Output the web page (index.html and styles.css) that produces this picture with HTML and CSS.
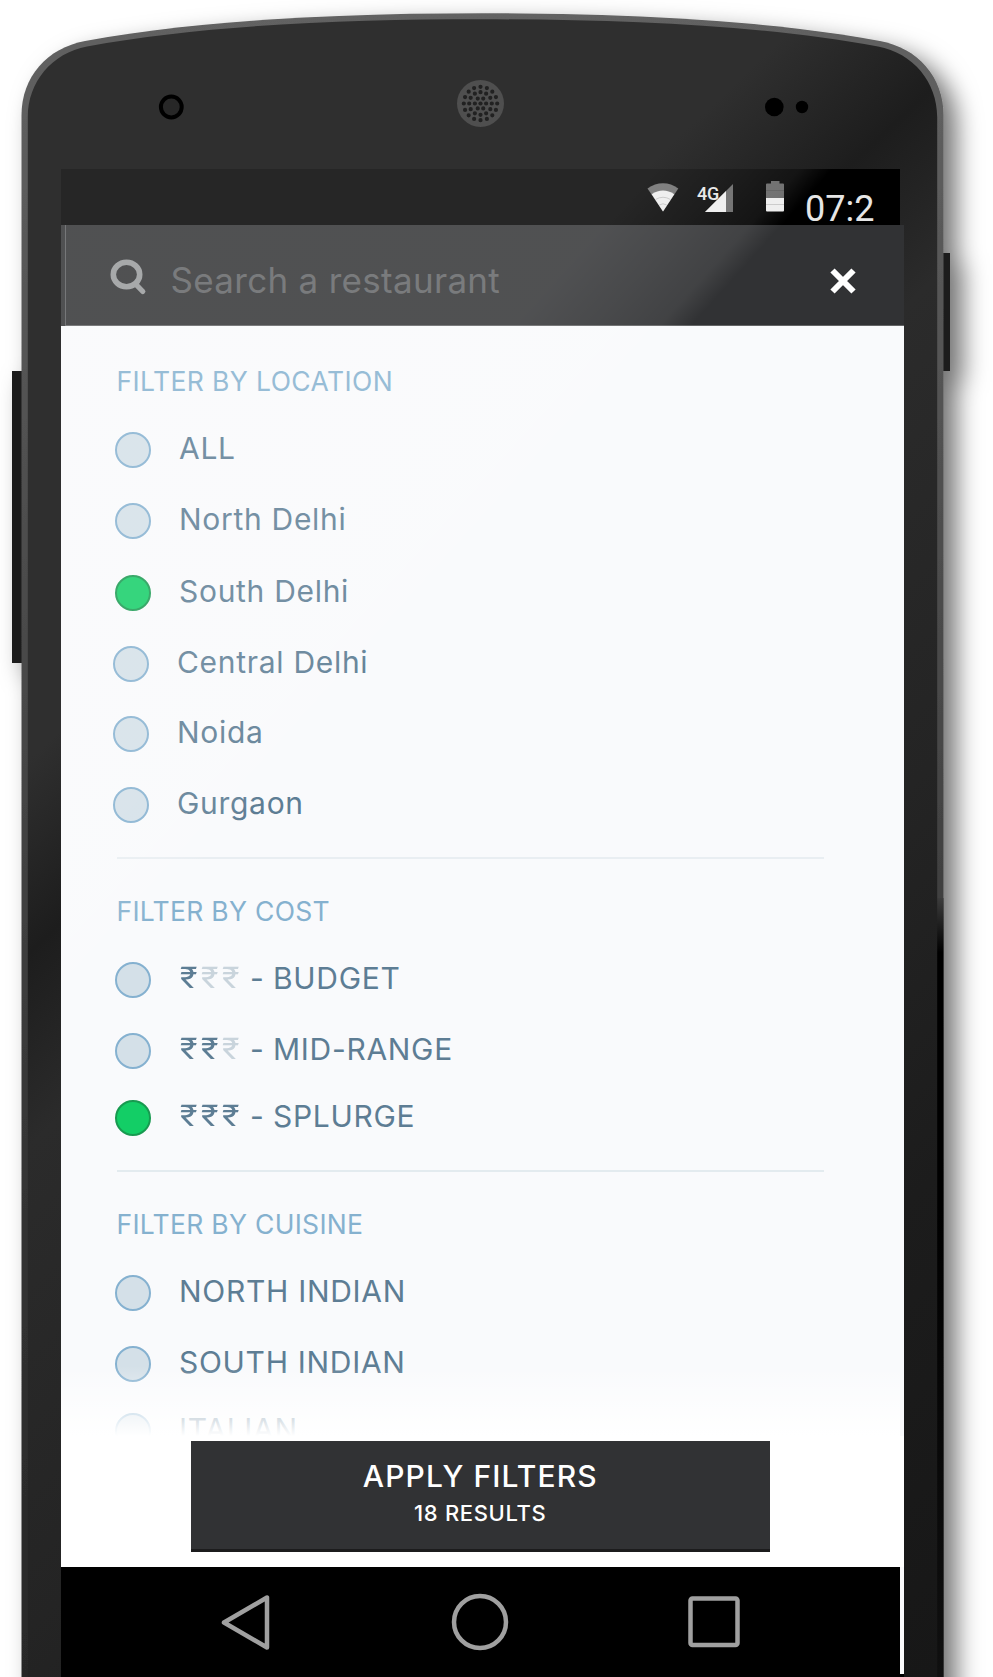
FILE: index.html
```html
<!DOCTYPE html>
<html lang="en">
<head>
<meta charset="utf-8">
<title>Restaurant filters</title>
<link rel="stylesheet" href="styles.css">
</head>
<body>
<div class="phone">
  <svg class="frame" width="993" height="1677" viewBox="0 0 993 1677" aria-hidden="true">
    <defs>
      <linearGradient id="body" gradientUnits="userSpaceOnUse" x1="0" y1="0" x2="1380" y2="1440">
        <stop offset="0" stop-color="#2f2f2f"/>
        <stop offset=".285" stop-color="#2f2f2f"/>
        <stop offset=".355" stop-color="#1d1d1d"/>
        <stop offset=".425" stop-color="#2b2b2b"/>
        <stop offset=".6" stop-color="#242424"/>
        <stop offset=".75" stop-color="#1c1c1c"/>
        <stop offset=".93" stop-color="#171717"/>
      </linearGradient>
      <linearGradient id="rim" x1="0" y1="0" x2="0" y2="1">
        <stop offset="0" stop-color="#626262"/>
        <stop offset=".2" stop-color="#545454"/>
        <stop offset=".45" stop-color="#444"/>
        <stop offset=".7" stop-color="#323232"/>
        <stop offset="1" stop-color="#262626"/>
      </linearGradient>
      <linearGradient id="rimRight" x1="0" y1="0" x2="0" y2="1">
        <stop offset="0" stop-color="#3c3c3c"/>
        <stop offset=".07" stop-color="#000"/>
        <stop offset=".4" stop-color="#000"/>
        <stop offset="1" stop-color="#101010"/>
      </linearGradient>
      <filter id="shadow" filterUnits="userSpaceOnUse" x="-60" y="-60" width="1120" height="1900">
        <feDropShadow dx="13" dy="11" stdDeviation="12.5" flood-color="#000" flood-opacity=".55"/>
      </filter>
    </defs>
    <g filter="url(#shadow)">
      <rect x="12" y="371" width="14" height="292" fill="#1d1d1d"/>
      <rect x="940" y="253" width="10" height="118" fill="#1d1d1d"/>
      <path d="M21.5 1760V115C21.5 77 47 48 85 41C200 20 340 13.3 482.5 13.3S765 20 880 41C918 48 943.5 77 943.5 115V1760Z" fill="url(#rim)"/>
    </g>
    <rect x="937" y="898" width="6.5" height="779" fill="url(#rimRight)"/>
    <path d="M27.8 1760V117C27.8 82 52 53 87 46.5C200 25.5 340 19.3 482.5 19.3S765 25.5 878 46.5C913 53 937.2 82 937.2 117V1760Z" fill="url(#body)"/>
    <circle cx="171.3" cy="107" r="10.4" fill="#272727" stroke="#000" stroke-width="4"/>
    <circle cx="480.5" cy="103.5" r="23.5" fill="#4f4f4f"/>
    <g fill="none" stroke="#212121" stroke-width="4.2" stroke-linecap="round">
      <circle cx="480.5" cy="103.5" r="16.7" pathLength="16" stroke-dasharray="0 1"/>
      <circle cx="480.5" cy="103.5" r="11.3" pathLength="12" stroke-dasharray="0 1"/>
      <circle cx="480.5" cy="103.5" r="5.6" pathLength="6" stroke-dasharray="0 1"/>
    </g>
    <circle cx="480.5" cy="103.5" r="2.1" fill="#212121"/>
    <circle cx="774.3" cy="107" r="9.3"/>
    <circle cx="802" cy="107" r="6.2"/>
  </svg>

  <div class="screen">
    <header class="status">
      <svg class="wifi" width="32" height="30" viewBox="0 0 32 30">
        <path d="M.5 6.500C10 -.5 22 -.5 31.300 6.500L16 29.500Z" fill="#6c6c6c"/>
        <path d="M4.700 12.300C12 7.300 20 7.300 27.300 12.300L16 29.500Z" fill="#ededed"/>
        <path d="M8.500 17.500Q16 13 23.500 17.500M12.300 23Q16 20.500 19.700 23" fill="none" stroke="#c4c4c4"/>
      </svg>
      <div class="cell">
        <svg width="28" height="28" viewBox="0 0 28 28">
          <path d="M28 0V28H0Z" fill="#666"/>
          <path d="M21 7V28H0Z" fill="#ededed"/>
        </svg>
        <span class="gen">4G</span>
      </div>
      <svg class="battery" width="18" height="31" viewBox="0 0 18 31">
        <path d="M5 0h8.500v2.500H17a1 1 0 0 1 1 1V18H0V3.500a1 1 0 0 1 1-1h4Z" fill="#666"/>
        <path d="M0 17h18v12.500a1 1 0 0 1-1 1H1a1 1 0 0 1-1-1Z" fill="#ededed"/>
        <path d="M0 23.500h18" stroke="#c8c8c8"/>
        <path d="M0 9.500h18" stroke="#595959"/>
      </svg>
      <span class="time">07:2</span>
    </header>

    <div class="search">
      <svg class="glass" width="37" height="37" viewBox="0 0 37 37" fill="none" stroke="#989a9b">
        <ellipse cx="16.500" cy="15.500" rx="13.200" ry="12.200" stroke-width="5.600"/>
        <path d="M26 25.500L32.800 32.500" stroke-width="5.200" stroke-linecap="round"/>
      </svg>
      <span class="placeholder">Search a restaurant</span>
      <svg class="close" width="26" height="26" viewBox="0 0 26 26" stroke="#fff" stroke-width="6" fill="none">
        <path d="M2.500 2.500L23.500 23.500M23.500 2.500L2.500 23.500"/>
      </svg>
    </div>

    <main class="filters">
      <section class="group location">
        <h2>FILTER BY LOCATION</h2>
        <ul>
          <li><i class="dot"></i><span>ALL</span></li>
          <li><i class="dot"></i><span>North Delhi</span></li>
          <li><i class="dot on"></i><span>South Delhi</span></li>
          <li class="out"><i class="dot"></i><span>Central Delhi</span></li>
          <li class="out tight"><i class="dot"></i><span>Noida</span></li>
          <li class="out"><i class="dot"></i><span>Gurgaon</span></li>
        </ul>
      </section>
      <section class="group cost">
        <h2>FILTER BY COST</h2>
        <ul>
          <li><i class="dot"></i><b>₹</b><b class="off">₹</b><b class="off">₹</b><em>-</em><span>BUDGET</span></li>
          <li><i class="dot"></i><b>₹</b><b>₹</b><b class="off">₹</b><em>-</em><span>MID-RANGE</span></li>
          <li class="tighter"><i class="dot on"></i><b>₹</b><b>₹</b><b>₹</b><em>-</em><span>SPLURGE</span></li>
        </ul>
      </section>
      <section class="group cuisine">
        <h2>FILTER BY CUISINE</h2>
        <ul>
          <li><i class="dot"></i><span>NORTH INDIAN</span></li>
          <li><i class="dot"></i><span>SOUTH INDIAN</span></li>
          <li class="tighter"><i class="dot"></i><span>ITALIAN</span></li>
        </ul>
      </section>
      <div class="fade"></div>
    </main>

    <div class="actions">
      <button class="apply"><span class="main">APPLY FILTERS</span><span class="sub">18 RESULTS</span></button>
    </div>

    <nav class="nav">
      <svg width="50" height="57" viewBox="0 0 50 57"><path d="M46 3.500V53.500L3 28.500Z"/></svg>
      <svg width="58" height="58" viewBox="0 0 58 58"><circle cx="29" cy="29" r="26"/></svg>
      <svg width="52" height="52" viewBox="0 0 52 52"><rect x="2.500" y="2.500" width="47" height="46.500" rx="2"/></svg>
    </nav>

    <svg class="glare" width="843" height="1508" viewBox="61 169 843 1508" aria-hidden="true">
      <defs>
        <linearGradient id="shine" gradientUnits="userSpaceOnUse" x1="0" y1="0" x2="743" y2="669">
          <stop offset="0" stop-color="#fff" stop-opacity=".15"/>
          <stop offset=".6" stop-color="#fff" stop-opacity=".15"/>
          <stop offset=".66" stop-color="#fff" stop-opacity=".115"/>
          <stop offset=".708" stop-color="#fff" stop-opacity=".08"/>
          <stop offset=".732" stop-color="#fff" stop-opacity="0"/>
        </linearGradient>
      </defs>
      <rect x="61" y="169" width="843" height="1508" fill="url(#shine)"/>
    </svg>
  </div>
</div>
</body>
</html>
```
FILE: styles.css
```css
* { box-sizing: border-box; }
body { margin: 0; background: #fff; }

.phone {
  position: relative;
  width: 993px;
  height: 1677px;
  overflow: hidden;
  padding: 169px 0 0 61px;
  font-family: Inter, "Liberation Sans", sans-serif;
}
.frame { position: absolute; left: 0; top: 0; }

.screen {
  position: relative;
  display: flex;
  flex-direction: column;
  width: 843px;
  height: 1508px;
}
.glare { position: absolute; left: 0; top: 0; pointer-events: none; clip-path: polygon(0 0, 839px 0, 839px 13px, 843px 13px, 843px 1508px, 0 1508px); }

.status {
  display: flex;
  justify-content: flex-end;
  align-items: flex-start;
  width: 839px;
  height: 56px;
  padding-right: 22px;
  background: #000;
  color: #e6e6e6;
  font-family: Roboto, sans-serif;
}
.wifi { margin: 13px 18px 0 0; }
.cell { position: relative; width: 36px; margin: 15px 32.500px 0 0; text-align: right; line-height: 0; }
.gen { position: absolute; left: 0; top: 0; font-size: 18px; line-height: 20px; font-weight: 500; letter-spacing: -.3px; }
.battery { margin: 12px 21.500px 0 0; }
.time { width: 73px; margin-top: 19px; font-size: 36px; line-height: 42px; font-weight: 400; white-space: nowrap; }

.search {
  display: flex;
  align-items: flex-start;
  height: 101px;
  padding: 0 48px 0 43px;
  margin-left: 4px;
  background: #313234;
  border-bottom: 1px solid #636465;
  border-left: 1px solid #5e5f61;
  box-shadow: -4px 0 0 -1px #313234, -4px 0 0 0 #313234;
}
.glass { margin: 34px 0 0 .5px; }
.placeholder { flex: 1; margin: 31px 0 0 24px; color: #626466; font-size: 35px; line-height: 48px; font-weight: 400; letter-spacing: .3px; }
.close { margin-top: 43px; }

.filters {
  position: relative;
  height: 1110px;
  padding: 0 80px 0 54px;
  background: #f9fafc;
}
.group { margin-left: 2px; }
.group h2 {
  margin: 0 0 0 -.5px;
  padding-top: 39px;
  height: 106px;
  color: #85b1cf;
  font-size: 26.5px;
  line-height: 32px;
  font-weight: 400;
  letter-spacing: .4px;
}
.group ul { margin: 0 0 0 -2px; padding: 0; list-style: none; }
.location { height: 533px; border-bottom: 2px solid #e9eef2; }
.cost { height: 313px; border-bottom: 2px solid #e3ebef; }
.cost h2, .cuisine h2 { padding-top: 36px; height: 103px; letter-spacing: .3px; }
.group li {
  display: flex;
  align-items: center;
  height: 36px;
  margin-bottom: 35.4px;
  color: #5d7d94;
  font-size: 30px;
  line-height: 36px;
  white-space: nowrap;
}
.group li.out { margin-left: -2px; }
.group li.tight { margin-top: -2px; }
.group li.tighter { margin-top: -4.500px; }
.dot {
  flex: none;
  width: 36px;
  height: 36px;
  margin-right: 28px;
  border: 2px solid #85b1d0;
  border-radius: 50%;
  background: #d4e0e8;
}
.dot.on { background: #13ce66; border-color: #189a50; }
.group li span { letter-spacing: .7px; font-weight: 400; padding-bottom: 4px; }
.group li b {
  position: relative;
  left: 1px;
  width: 21px;
  padding-bottom: 4px;
  font-family: Roboto, sans-serif;
  font-weight: 400;
  transform: scaleX(1.12);
  transform-origin: 0 50%;
}
.group li .off { color: #c9d4dc; }
.group li em { width: 23px; margin-left: 8px; font-style: normal; font-weight: 400; padding-bottom: 4px; }
.fade {
  position: absolute;
  left: 0;
  right: 4px;
  bottom: -30px;
  height: 100px;
  background: linear-gradient(rgba(255,255,255,0), #fff 70px);
}

.actions { position: relative; height: 131px; padding: 5px 0 0 129.500px; background: #fff; }
.apply {
  display: flex;
  flex-direction: column;
  align-items: center;
  width: 579.500px;
  height: 111px;
  padding: 17px 0 0;
  border: 0;
  border-bottom: 3px solid #1c1c1d;
  background: #313234;
  color: #fff;
  font-family: inherit;
}
.main { font-size: 30px; line-height: 36px; font-weight: 500; letter-spacing: 1.1px; }
.sub { margin-top: 5px; font-size: 22px; line-height: 28px; font-weight: 500; letter-spacing: .65px; }

.nav {
  display: flex;
  align-items: center;
  gap: 179.500px;
  height: 110px;
  padding: 0 0 0 160px;
  background: linear-gradient(#fafafc, #fafafc) right top / 4px 107px no-repeat, #000;
}
.nav svg { flex: none; fill: none; stroke: #a0a0a0; stroke-width: 4.500px; stroke-linejoin: round; }
```
